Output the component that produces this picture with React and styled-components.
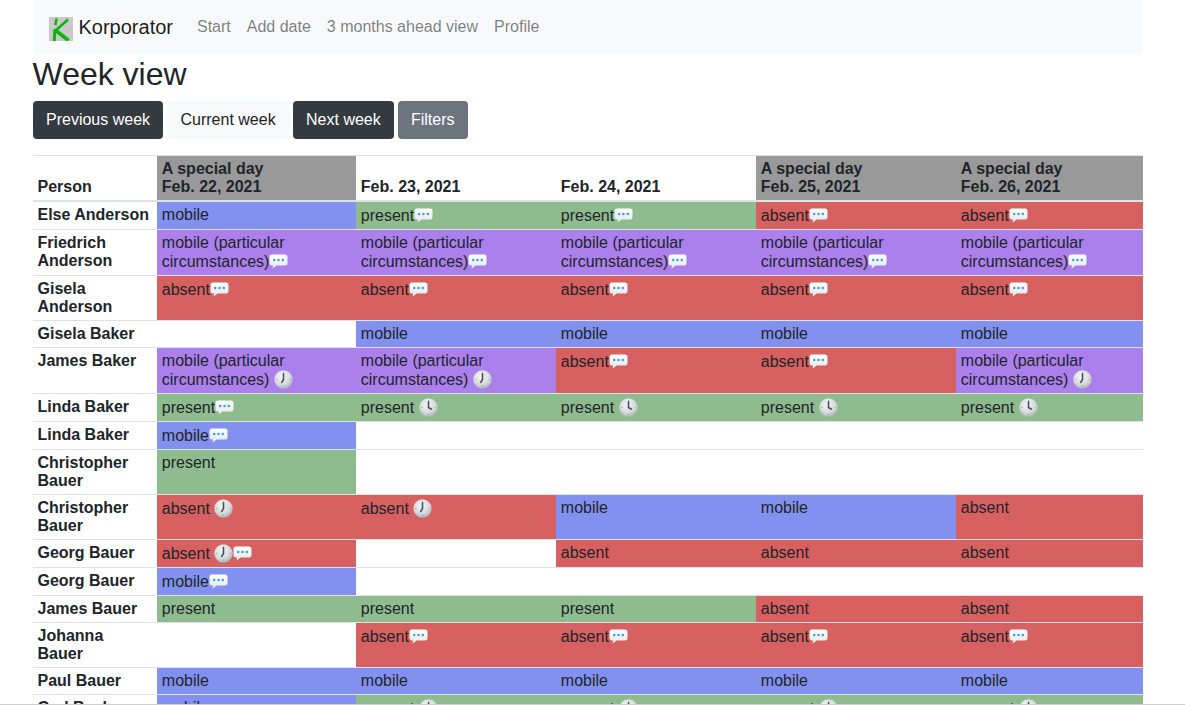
import React, { useId } from "react";
import styled, { createGlobalStyle } from "styled-components";

const Global = createGlobalStyle`
  html, body { margin: 0; padding: 0; background: #fff; }
  body {
    font-family: "Liberation Sans", Arial, sans-serif;
    font-size: 16px;
    line-height: 1.5;
    color: #212529;
  }
  * { box-sizing: border-box; }
`;

const Viewport = styled.div`
  height: 705px;
  overflow: hidden;
  border-bottom: 1px solid #cfcfcf;
`;
const Container = styled.div`
  width: 1110px;
  margin-left: 32.5px;
`;
const Navbar = styled.nav`
  display: flex;
  align-items: center;
  height: 55px;
  padding: 0 16px 1px;
  background: #f8f9fa;
`;
const Brand = styled.a`
  display: flex;
  align-items: center;
  gap: 6px;
  margin-right: 16px;
  font-size: 20px;
  color: rgba(0, 0, 0, 0.9);
`;
const LogoMark = styled.svg`
  display: block;
  width: 24px;
  height: 24px;
  margin-top: 4px;
`;
const NavLink = styled.a`
  padding: 0 8px;
  color: rgba(0, 0, 0, 0.5);
`;
const Title = styled.h1`
  margin: 0 0 8px;
  font-size: 32px;
  font-weight: 400;
  line-height: 1.2;
`;
const Toolbar = styled.div`
  display: flex;
  margin-bottom: 16px;
  padding-left: 0.5px;
`;
const tones = {
  dark: ["#343a40", "#fff"],
  light: ["#f8f9fa", "#212529"],
  secondary: ["#6c757d", "#fff"],
};
const Button = styled.button`
  height: 38px;
  margin-right: ${(p) => p.$gap}px;
  padding: 0 13px;
  min-width: ${(p) => p.$min || 0}px;
  border: 0;
  border-radius: 4px;
  font: inherit;
  background: ${(p) => tones[p.$tone][0]};
  color: ${(p) => tones[p.$tone][1]};
`;
const Table = styled.table`
  width: 1110px;
  table-layout: fixed;
  border-collapse: collapse;
  line-height: 18px;
`;
const HeadCell = styled.th`
  padding: 4px ${(p) => (p.$first ? "5px" : "4.8px")};
  text-align: left;
  vertical-align: bottom;
  border-top: 1px solid #dee2e6;
  border-bottom: 2px solid #dee2e6;
  background: ${(p) => (p.$special ? "#999999" : "transparent")};
`;
const NameCell = styled.th`
  padding: 4px 5px;
  text-align: left;
  vertical-align: top;
  border-top: 1px solid #dee2e6;
`;
const statusColors = {
  mobile: "#8291ef",
  particular: "#ab80ed",
  present: "#8fbc8f",
  absent: "#d76060",
  none: "transparent",
};
const Cell = styled.td`
  padding: 4px 4.8px;
  vertical-align: top;
  border-top: 1px solid #dee2e6;
  background: ${(p) => statusColors[p.$status]};
`;
const Emoji = styled.svg`
  display: inline-block;
  width: 19px;
  height: 19px;
  vertical-align: -3.1px;
  margin-bottom: -1px;
`;

function Logo() {
  return (
    <LogoMark viewBox="0 0 24 24">
      <rect width="24" height="24" fill="#c9c9c9" />
      <g stroke="#0fb30f" strokeWidth="2.6" fill="none">
        <path d="M7.6 1.5 6.4 8" />
        <path d="M19 2.5 5.5 14.5" />
        <path d="M6 12 5.2 24" strokeWidth="3" />
        <path d="M7.5 14 19.5 23.5" strokeWidth="3.6" />
      </g>
    </LogoMark>
  );
}

function Balloon() {
  const id = useId();
  return (
    <Emoji viewBox="0 0 19 19">
      <defs>
        <linearGradient id={id} x1="0" y1="0" x2="0" y2="1">
          <stop offset="0" stopColor="#ffffff" />
          <stop offset="1" stopColor="#e4e6e8" />
        </linearGradient>
      </defs>
      <path
        d="M3 2.5h13a2.5 2.5 0 0 1 2.5 2.5v6a2.5 2.5 0 0 1-2.5 2.5H7.5L3.6 16.8 4 13.5H3A2.5 2.5 0 0 1 .5 11V5A2.5 2.5 0 0 1 3 2.5z"
        fill={`url(#${id})`}
      />
      <circle cx="5.2" cy="8" r="1.2" fill="#2b9cf2" />
      <circle cx="9.5" cy="8" r="1.2" fill="#2b9cf2" />
      <circle cx="13.8" cy="8" r="1.2" fill="#2b9cf2" />
    </Emoji>
  );
}

function Clock({ hour }) {
  const id = useId();
  const a = (hour * 30 * Math.PI) / 180;
  const hx = 9.5 + 3.4 * Math.sin(a);
  const hy = 9.5 - 3.4 * Math.cos(a);
  return (
    <Emoji viewBox="0 0 19 19">
      <defs>
        <radialGradient id={id} cx="0.42" cy="0.32" r="0.75">
          <stop offset="0" stopColor="#f4f5f5" />
          <stop offset="0.6" stopColor="#d6dadc" />
          <stop offset="1" stopColor="#a3abb0" />
        </radialGradient>
      </defs>
      <circle cx="9.5" cy="9.5" r="9.2" fill={`url(#${id})`} />
      <g stroke="#a8afb3" strokeWidth="1">
        <path d="M9.5 1.8v1.6M9.5 15.6v1.6M1.8 9.5h1.6M15.6 9.5h1.6" />
      </g>
      <g stroke="#4a5054" strokeWidth="1.6" strokeLinecap="round" fill="none">
        <path d={`M9.5 3.8V9.5L${hx} ${hy}`} />
      </g>
    </Emoji>
  );
}

const days = [
  { date: "Feb. 22, 2021", special: true },
  { date: "Feb. 23, 2021" },
  { date: "Feb. 24, 2021" },
  { date: "Feb. 25, 2021", special: true },
  { date: "Feb. 26, 2021", special: true },
];

const widths = [124.5, 199, 200, 200, 200, 186.5];

const labels = {
  m: ["mobile", "mobile"],
  p: ["particular", "mobile (particular circumstances)"],
  g: ["present", "present"],
  a: ["absent", "absent"],
};

// code: status letter, digit = clock with that hour, trailing "b" = note balloon
const rows = [
  ["Else Anderson", "m", "gb", "gb", "ab", "ab"],
  ["Friedrich Anderson", "pb", "pb", "pb", "pb", "pb"],
  ["Gisela Anderson", "ab", "ab", "ab", "ab", "ab"],
  ["Gisela Baker", "", "m", "m", "m", "m"],
  ["James Baker", "p7", "p7", "ab", "ab", "p7"],
  ["Linda Baker", "gb", "g4", "g4", "g4", "g4"],
  ["Linda Baker", "mb", "", "", "", ""],
  ["Christopher Bauer", "g", "", "", "", ""],
  ["Christopher Bauer", "a7", "a7", "m", "m", "a"],
  ["Georg Bauer", "a7b", "", "a", "a", "a"],
  ["Georg Bauer", "mb", "", "", "", ""],
  ["James Bauer", "g", "g", "g", "a", "a"],
  ["Johanna Bauer", "", "ab", "ab", "ab", "ab"],
  ["Paul Bauer", "m", "m", "m", "m", "m"],
  ["Carl Beck", "m", "g4", "g4", "g4", "g4"],
];

function Entry({ code }) {
  if (!code) return <Cell $status="none" />;
  const [status, text] = labels[code[0]];
  const hour = code.match(/\d/);
  return (
    <Cell $status={status}>
      {text}
      {hour && (
        <>
          {" "}
          <Clock hour={Number(hour[0])} />
        </>
      )}
      {code.endsWith("b") && <Balloon />}
    </Cell>
  );
}

export default function App() {
  return (
    <Viewport>
      <Global />
      <Container>
        <Navbar>
          <Brand>
            <Logo />
            Korporator
          </Brand>
          <NavLink>Start</NavLink>
          <NavLink>Add date</NavLink>
          <NavLink>3 months ahead view</NavLink>
          <NavLink>Profile</NavLink>
        </Navbar>
        <Title>Week view</Title>
        <Toolbar>
          <Button $tone="dark" $gap={4.45}>Previous week</Button>
          <Button $tone="light" $gap={4.4}>Current week</Button>
          <Button $tone="dark" $gap={4}>Next week</Button>
          <Button $tone="secondary" $gap={0} $min={70}>Filters</Button>
        </Toolbar>
        <Table>
          <colgroup>
            {widths.map((w, i) => (
              <col key={i} width={w} />
            ))}
          </colgroup>
          <thead>
            <tr>
              <HeadCell $first>Person</HeadCell>
              {days.map((d) => (
                <HeadCell key={d.date} $special={d.special}>
                  {d.special && <div>A special day</div>}
                  <div>{d.date}</div>
                </HeadCell>
              ))}
            </tr>
          </thead>
          <tbody>
            {rows.map(([name, ...codes], r) => (
              <tr key={r}>
                <NameCell>{name}</NameCell>
                {codes.map((c, i) => (
                  <Entry key={i} code={c} />
                ))}
              </tr>
            ))}
          </tbody>
        </Table>
      </Container>
    </Viewport>
  );
}
